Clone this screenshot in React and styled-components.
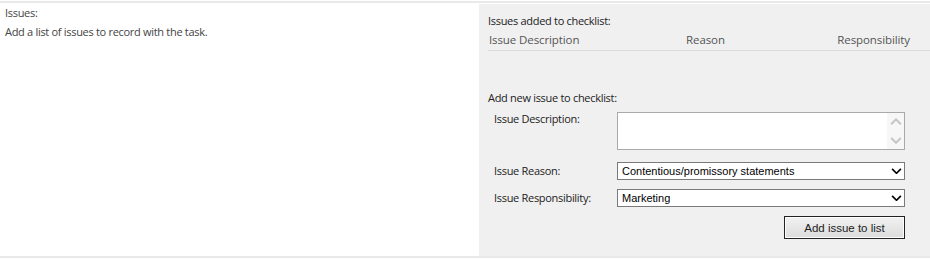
import React from 'react';
import styled, { createGlobalStyle } from 'styled-components';

const GlobalStyle = createGlobalStyle`
  body {
    margin: 0;
    background: #fff;
    font-family: "Open Sans", "Noto Sans", sans-serif;
    font-size: 11px;
    letter-spacing: -0.3px;
    color: #444;
  }
`;

const Section = styled.div`
  width: 930px;
  height: 259px;
  box-sizing: border-box;
  padding-top: 1px;
`;

const Row = styled.div`
  display: grid;
  grid-template-columns: 479px 1fr;
  border-top: 2px solid #e9e9e9;
  border-bottom: 2px solid #e9e9e9;
  height: 253px;
  box-sizing: content-box;
`;

const LabelCell = styled.div`
  padding: 3px 5px;
`;

const Title = styled.div`
  line-height: 14px;
  color: #444;
`;

const Description = styled.div`
  margin-top: 5px;
  line-height: 14px;
  color: #444;
`;

const Panel = styled.div`
  background: #f0f0f0;
  margin-top: 1px;
  padding: 10px 0 0 9px;
`;

const Heading = styled.div`
  color: #222;
  line-height: 14px;
`;

const TableHead = styled.div`
  display: grid;
  grid-template-columns: 1fr auto 1fr;
  margin-top: 4px;
  padding: 0 20px 3px 1px;
  border-bottom: 1px solid #dcdcdc;
  color: #555;
  font-size: 11.5px;
  letter-spacing: -0.1px;
  line-height: 15px;
`;

const HeadCell = styled.div`
  text-align: ${p => p.align || 'left'};
  padding-left: ${p => p.shift || 0}px;
`;

const FormBlock = styled.div`
  margin-top: 40px;
`;

const FieldRow = styled.div`
  display: grid;
  grid-template-columns: 123px 288px;
  align-items: ${p => p.top ? 'start' : 'center'};
  margin-top: ${p => p.gap || 0}px;
  padding-left: 6px;
`;

const FieldLabel = styled.div`
  color: #222;
  line-height: 14px;
`;

const TextArea = styled.div`
  height: 38px;
  background: #fff;
  border: 1px solid #a9a9a9;
  box-sizing: border-box;
  display: flex;
  justify-content: flex-end;
`;

const ScrollTrack = styled.div`
  width: 17px;
  background: #f7f7f7;
  display: flex;
  flex-direction: column;
  justify-content: space-between;
  align-items: center;
  padding: 5px 0;
`;

const Select = styled.div`
  height: 18px;
  background: #fff;
  border: 1px solid #7a7a7a;
  box-sizing: border-box;
  display: flex;
  align-items: center;
  justify-content: space-between;
  padding: 0 2px 0 4px;
  font-family: "Liberation Sans", Arial, sans-serif;
  font-size: 11px;
  letter-spacing: 0;
  color: #000;
`;

const ButtonRow = styled.div`
  display: flex;
  justify-content: flex-end;
  width: 417px;
  margin-top: 9px;
`;

const Button = styled.button`
  width: 121px;
  height: 23px;
  border: 1px solid #222;
  background: linear-gradient(#f2f2f2, #dcdcdc);
  box-shadow: inset 0 0 0 1px #fdfdfd;
  font-family: "Liberation Sans", Arial, sans-serif;
  font-size: 11.5px;
  color: #222;
  padding: 0;
`;

const Chevron = ({ up, color = '#c4c4c4', w = 12, sw = 1.6 }) => (
  <svg width={w} height={w * 0.6} viewBox="0 0 10 6">
    <path d={up ? 'M1 5.2L5 1.2L9 5.2' : 'M1 0.8L5 4.8L9 0.8'} fill="none" stroke={color} strokeWidth={sw} />
  </svg>
);

export default function App() {
  return (
    <>
      <GlobalStyle />
      <Section>
        <Row>
          <LabelCell>
            <Title>Issues:</Title>
            <Description>Add a list of issues to record with the task.</Description>
          </LabelCell>
          <Panel>
            <Heading>Issues added to checklist:</Heading>
            <TableHead>
              <HeadCell>Issue Description</HeadCell>
              <HeadCell align="center" shift={12}>Reason</HeadCell>
              <HeadCell align="right">Responsibility</HeadCell>
            </TableHead>
            <FormBlock>
              <Heading>Add new issue to checklist:</Heading>
              <FieldRow top gap={7}>
                <FieldLabel>Issue Description:</FieldLabel>
                <TextArea>
                  <ScrollTrack>
                    <Chevron up />
                    <Chevron />
                  </ScrollTrack>
                </TextArea>
              </FieldRow>
              <FieldRow gap={12}>
                <FieldLabel>Issue Reason:</FieldLabel>
                <Select>
                  <span>Contentious/promissory statements</span>
                  <Chevron color="#000" w={11} sw={1.5} />
                </Select>
              </FieldRow>
              <FieldRow gap={9}>
                <FieldLabel>Issue Responsibility:</FieldLabel>
                <Select>
                  <span>Marketing</span>
                  <Chevron color="#000" w={11} sw={1.5} />
                </Select>
              </FieldRow>
              <ButtonRow>
                <Button>Add issue to list</Button>
              </ButtonRow>
            </FormBlock>
          </Panel>
        </Row>
      </Section>
    </>
  );
}
